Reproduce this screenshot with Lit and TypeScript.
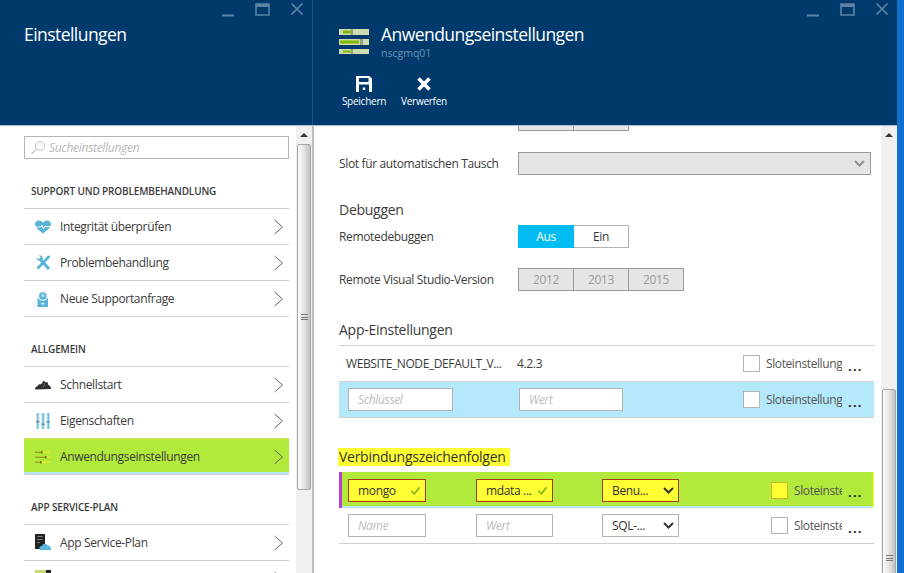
import { LitElement, html, css, svg } from "lit";
import { customElement } from "lit/decorators.js";

const chevron = html`<svg class="chev" width="12" height="16" viewBox="0 0 12 16"><path d="M2.500 1l8 7-8 7" fill="none" stroke="#666" stroke-width="1"/></svg>`;

const icons: Record<string, unknown> = {
  heart: svg`<path d="M8 15.500C3.500 12 0 9.500 0 6 0 3.800 1.800 2.500 3.800 2.500 5.500 2.500 7 3.200 8 4.500 9 3.200 10.500 2.500 12.200 2.500 14.200 2.500 16 3.800 16 6 16 9.500 12.500 12 8 15.500z" fill="#59b4d9"/><path d="M0 9h5.500l1.300-2 1.700 4 1.300-2.500H16" fill="none" stroke="#fff" stroke-width="1"/>`,
  tools: svg`<path d="M4.500 4.500L14 15" stroke="#59b4d9" stroke-width="3.200" fill="none"/><path d="M1 3.500c.3 2.500 2.500 3.800 4.500 3L8 4.500C8 2.500 6.500 1 4 1.200L6 3.500 4 5.500z" fill="#59b4d9"/><path d="M14 2.500L2.500 14.500" stroke="#59b4d9" stroke-width="2.600" fill="none"/><path d="M12.500 3.500l2-2.200 1 1-2 2.200z" fill="#59b4d9"/>`,
  support: svg`<rect x="2.500" y="8" width="10.500" height="9" fill="#59b4d9"/><circle cx="7.800" cy="6" r="5" fill="#fff"/><circle cx="7.800" cy="6" r="3.800" fill="#59b4d9"/><circle cx="7.800" cy="5.500" r="1.700" fill="#b8e0ef"/><path d="M6 13l1.800 2.200L9.500 13z" fill="#fff"/>`,
  quick: svg`<path d="M0 13.500c0-2 1-3 2.500-3.200C3 8.500 4.500 8 6 8.300L9 4.500l1.500 2 2-.5 1 3.300c1.500.2 2.500 1.400 2.500 3.700z" fill="#2f2f2f"/><path d="M8.800 7l1 2.500L8 11" fill="none" stroke="#8a8a8a" stroke-width=".7"/>`,
  props: svg`<path d="M1 1h3.500v16H1zM6.300 1h3.500v16H6.300zM11.500 1H15v16h-3.500z" fill="#cbe6f1"/><path d="M2.200 1h1.200v16H2.200zM7.500 1h1.200v16H7.500zM12.700 1h1.200v16h-1.200z" fill="#59b4d9"/><path d="M1 9h3.500v1.500H1zM6.300 11.500h3.500V13H6.300zM11.500 9H15v1.500h-3.500z" fill="#7b8f99"/>`,
  app: svg`<path d="M0 3.500h15V5H0zM0 8.500h15V10H0zM0 13.500h15V15H0z" fill="#e9e72a"/><path d="M0 3.500h7V5H0zM0 8.500h11V10H0zM0 13.500h6V15H0z" fill="#8fa51f"/><path d="M6 3h1.500v2.500H6zM10 8h1.500v2.500H10zM5 13h1.500v2.500H5z" fill="#5e6f16"/>`,
  plan: svg`<rect x="0" y="0" width="10" height="15" fill="#222"/><path d="M2 2h6v1H2zM2 5h6v1H2zM2 8h3v1H2z" fill="#777"/><path d="M5 16c-1.500-2 0-4.500 2-4 .5-2.500 4.500-3 5.500-.5 2-.5 3.500 1 3.500 4.500z" fill="#59b4d9"/>`,
  next: svg`<rect x="0" y="0" width="11" height="18" fill="#c8d96f"/><rect x="11" y="0" width="5" height="18" fill="#222"/>`,
};

const rowIcon = (n: string) => html`<svg class="ic" width="18" height="18" viewBox="0 0 18 18">${icons[n]}</svg>`;

interface MenuSection { title: string; rows: { icon: string; label: string; sel?: boolean }[] }
const menu: MenuSection[] = [
  { title: "SUPPORT UND PROBLEMBEHANDLUNG", rows: [
    { icon: "heart", label: "Integrität überprüfen" },
    { icon: "tools", label: "Problembehandlung" },
    { icon: "support", label: "Neue Supportanfrage" },
  ]},
  { title: "ALLGEMEIN", rows: [
    { icon: "quick", label: "Schnellstart" },
    { icon: "props", label: "Eigenschaften" },
    { icon: "app", label: "Anwendungseinstellungen", sel: true },
  ]},
  { title: "APP SERVICE-PLAN", rows: [
    { icon: "plan", label: "App Service-Plan" },
    { icon: "next", label: "" },
  ]},
];

const winButtons = html`<div class="win">
  <svg width="14" height="16" viewBox="0 0 14 16"><path d="M1 13.500h12" stroke="#5b84a8" stroke-width="2"/></svg>
  <svg width="15" height="14" viewBox="0 0 15 14"><path d="M1 2h13v11H1z" fill="none" stroke="#5b84a8" stroke-width="1.600"/><path d="M1 3.500h13" stroke="#5b84a8" stroke-width="3"/></svg>
  <svg width="14" height="14" viewBox="0 0 14 14"><path d="M1.500 1.500l11 11M12.500 1.500l-11 11" stroke="#5b84a8" stroke-width="1.700"/></svg>
</div>`;

const tick = html`<svg class="tick" width="11" height="9" viewBox="0 0 13 11"><path d="M1.500 6l3.500 3.500 6.500-8" fill="none" stroke="#86b81e" stroke-width="2.200"/></svg>`;
const caret = html`<svg class="caret" width="11" height="7" viewBox="0 0 11 7"><path d="M1 1l4.500 4.500L10 1" fill="none" stroke="#333" stroke-width="2"/></svg>`;
const caretOff = html`<svg class="caret" width="11" height="7" viewBox="0 0 11 7"><path d="M1 1l4.500 4.500L10 1" fill="none" stroke="#8f8f8f" stroke-width="2"/></svg>`;

@customElement("app-root")
export class AppRoot extends LitElement {
  static styles = css`
    :host { display: block; width: 904px; height: 573px; overflow: hidden; background: #0f6fcf;
      font-family: "Open Sans", "Noto Sans", sans-serif; font-size: 12px; color: #3b3b3b; letter-spacing: -0.35px; }
    .root { display: flex; height: 573px; }
    .blade { display: flex; flex-direction: column; height: 573px; background: #fff; overflow: hidden; }
    .left { width: 312px; }
    .sep { width: 2px; display: flex; flex-direction: column; background: #bdbdbd; }
    .sep div { height: 125px; box-sizing: border-box; background: #003a6c; border-left: 1px solid #1f5080; }
    .right { width: 583px; }
    .head { height: 125px; box-sizing: border-box; background: #003a6c; flex: none; position: relative; color: #fff; }
    .headline { height: 1px; background: #a9bdd0; flex: none; }
    .win { position: absolute; top: 2px; right: 8px; display: flex; gap: 20px; align-items: flex-start; }
    .win svg { display: block; }
    .left .head h1 { margin: 0; padding: 22px 0 0 24px; font-weight: 400; font-size: 17.500px; line-height: 24px; letter-spacing: -0.55px; }
    .titlebar { display: flex; padding: 22px 0 0 25px; gap: 12px; }
    .titlebar h1 { margin: 0; font-weight: 400; font-size: 17.500px; line-height: 24px; letter-spacing: -0.55px; }
    .titlebar .sub { font-size: 10.500px; line-height: 14px; color: #6d93b5; letter-spacing: 0; }
    .hicon { margin-top: 7px; display: block; }
    .cmds { display: flex; padding: 15px 0 0 26px; gap: 12px; }
    .cmd { width: 48px; display: flex; flex-direction: column; align-items: center; font-size: 10px; line-height: 14px; gap: 1px; white-space: nowrap; letter-spacing: -0.25px; }
    .cmd svg { display: block; }
    .body { flex: 1; display: flex; min-height: 0; }
    .pane { flex: 1; min-width: 0; overflow: hidden; }
    .sb { width: 16px; flex: none; background: #f0f0f0; overflow: hidden; }
    .sb .up { height: 18px; display: flex; justify-content: center; align-items: center; }
    .sb .up i { border: 4px solid transparent; border-top: 0; border-bottom: 4px solid #333; width: 0; height: 0; display: block; }
    .thumb { box-sizing: border-box; margin: 0 1px; border: 1px solid #a6a6a6; border-radius: 2px; background: linear-gradient(90deg, #fbfbfb, #e4e4e4 50%, #c2c2c2); display: flex; align-items: center; justify-content: center; }
    .thumb b { display: block; width: 7px; height: 6px; border-top: 1px solid #777; border-bottom: 1px solid #777; box-sizing: border-box; background: linear-gradient(#fff0 2px, #777 2px, #777 3px, #fff0 3px); }

    .lp { padding: 10px 7px 0 24px; }
    .search { height: 23px; box-sizing: border-box; border: 1px solid #b5b5b5; display: flex; align-items: center; padding-left: 5px; gap: 3px; color: #b7b7b7; font-style: italic; letter-spacing: -0.3px; }
    .shead { height: 49px; box-sizing: border-box; display: flex; align-items: flex-end; padding: 0 0 9px 7px; font-size: 10px; line-height: 16px; font-weight: 600; color: #3b3b3b; letter-spacing: -0.15px; }
    .mrow { height: 36px; box-sizing: border-box; border-top: 1px solid #cfcfcf; display: flex; align-items: center; padding: 0 5px 0 11px; gap: 7px; }
    .rows { border-bottom: 1px solid #cfcfcf; }
    .mrow span { flex: 1; font-size: 12px; }
    .mrow.sel { background: #b2ea3b; height: 36px; border-top: 1px solid #d8dc58; box-shadow: inset 0 -2px 0 #b4e6f5; }
    .chev, .ic { flex: none; display: block; }

    .rp { padding: 0 7px 0 25px; }
    .frow { display: flex; align-items: center; height: 23px; }
    .frow label { width: 179px; flex: none; }
    .seg { display: flex; height: 23px; }
    .seg > div { width: 55px; box-sizing: border-box; border: 1px solid #9b9b9b; border-left-width: 0; display: flex; align-items: center; justify-content: center; background: #e5e5e5; color: #9a9a9a; }
    .seg > div:first-child { border-left-width: 1px; width: 56px; }
    .seg.clip { margin: -18px 0 21px 179px; }
    .seg.on > div { background: #fff; border-color: #b3b3b3; color: #3b3b3b; }
    .seg.on > div.a { background: #00bcf2; border-color: #00bcf2; color: #fff; }
    .sel-off { width: 353px; height: 23px; box-sizing: border-box; background: #e5e5e5; border: 1px solid #9b9b9b; display: flex; justify-content: flex-end; align-items: center; padding-right: 5px; }
    h2 { margin: 0; font-weight: 400; font-size: 14px; line-height: 20px; color: #3b3b3b; letter-spacing: -0.27px; }
    .h-deb { margin: 25px 0 5px; }
    .mt20 { margin-top: 20px; }
    .h-app { margin: 29px 0 5px; }
    .table { width: 535px; }
    .trow { height: 36px; box-sizing: border-box; border-top: 1px solid #cfcfcf; display: flex; align-items: center; padding-right: 12px; }
    .trow.last { height: 37px; border-bottom: 1px solid #cfcfcf; }
    .trow.blue { background: #b3e9fb; }
    .key { width: 171px; padding-left: 7px; box-sizing: border-box; color: #3b3b3b; flex: none; white-space: nowrap; letter-spacing: -0.4px; }
    .val { width: 226px; flex: none; color: #3b3b3b; padding-left: 7px; box-sizing: border-box; }
    .inp { height: 23px; box-sizing: border-box; border: 1px solid #b3b3b3; background: #fff; display: flex; align-items: center; padding-left: 9px; color: #bdbdbd; font-style: italic; flex: none; }
    .w105 { width: 105px; margin-left: 9px; }
    .w104 { width: 104px; margin-left: 66px; }
    .cb { width: 17px; height: 17px; box-sizing: border-box; border: 1px solid #b3b3b3; background: #fff; flex: none; }
    .slot { color: #555; overflow: hidden; white-space: nowrap; margin-left: 6px; flex: none; letter-spacing: -0.4px; }
    .w76 { width: 76px; } .w48 { width: 48px; }
    .dots { margin-left: 6px; width: 14px; font-weight: 700; font-size: 13px; line-height: 14px; color: #222; letter-spacing: 1.2px; white-space: nowrap; padding-top: 4px; flex: none; }
    .ml-a { margin-left: auto; }
    .vhead { display: flex; margin: 30px 0 6px; }
    .vhead h2 { background: #ffff33; margin-left: -1px; padding: 0 4px 0 1px; line-height: 18px; height: 18px; color: #333; }
    .crow { height: 36px; box-sizing: border-box; display: flex; align-items: center; }
    .crow.hl { background: #b2ea3b; border-left: 3px solid #b93fd0; border-right: 1px solid #ffff33; box-shadow: inset 0 -2px 0 #b4e6f5; }
    .f { height: 23px; box-sizing: border-box; border: 1px solid #b3b3b3; background: #fff; display: flex; align-items: center; flex: none; padding: 0 4px 0 9px; justify-content: space-between; color: #333; }
    .hl .f { background: #ffff33; border-color: #a83a10; }
    .hl .cb { background: #ffff33; border-color: #c9b92a; }
    .ph { color: #bdbdbd; font-style: italic; }
    .f1 { width: 78px; } .f2 { width: 77px; }
    .g9 { margin-left: 9px; } .g6 { margin-left: 6px; } .g50 { margin-left: 50px; } .g49 { margin-left: 49px; }
    .g92 { margin-left: 92px; }
    .tick, .caret { flex: none; display: block; }
    .crow.n { height: 36px; border-bottom: 1px solid #cfcfcf; }
  `;

  private scrollbar(gap: number, h: number) {
    return html`<div class="sb"><div class="up"><i></i></div>
      <div class="thumb" style="margin-top:${gap}px;height:${h}px"><b></b></div></div>`;
  }

  private section(s: MenuSection) {
    return html`<div class="shead">${s.title}</div>
      <div class="rows">${s.rows.map((r) => html`<div class="mrow ${r.sel ? "sel" : ""}">${rowIcon(r.icon)}<span>${r.label}</span>${chevron}</div>`)}</div>`;
  }

  render() {
    return html`<div class="root">
      <section class="blade left">
        <header class="head"><h1>Einstellungen</h1>${winButtons}</header>
        <div class="headline"></div>
        <div class="body">
          <div class="pane lp">
            <div class="search">
              <svg width="16" height="15" viewBox="0 0 16 15"><circle cx="10" cy="6" r="4.500" fill="none" stroke="#c4c4c4"/><path d="M6.500 9L1.500 14" stroke="#c4c4c4" stroke-width="1.200"/></svg>
              Sucheinstellungen
            </div>
            ${menu.map((s) => this.section(s))}
          </div>
          ${this.scrollbar(0, 346)}
        </div>
      </section>
      <div class="sep"><div></div></div>
      <section class="blade right">
        <header class="head">
          <div class="titlebar">
            <svg class="hicon" width="30" height="26" viewBox="0 0 30 26">
              <path d="M0 0h30v6H0zM0 10h30v6H0zM0 20h30v5H0z" fill="#cfdcae"/>
              <path d="M4 1.500h8v3H4zM1 11.500h19v3H1zM4 21.500h8v2H4z" fill="#7fba00"/>
              <path d="M12 0h2v6h-2zM21 10h3v6h-3zM12 20h2v5h-2z" fill="#9a9f8d"/>
            </svg>
            <div><h1>Anwendungseinstellungen</h1><div class="sub">nscgmq01</div></div>
          </div>
          <div class="cmds">
            <div class="cmd">
              <svg width="18" height="18" viewBox="0 0 18 18"><path fill-rule="evenodd" d="M1 1h13.500L17 3.500V17H1zM4 3v4h9.500V3zM4 9.500V17h10V9.500zM7.800 12.500h2.400V15H7.800z" fill="#fff"/></svg>
              Speichern
            </div>
            <div class="cmd">
              <svg width="18" height="18" viewBox="0 0 18 18"><path d="M3.500 3.500l11 11M14.500 3.500l-11 11" stroke="#fff" stroke-width="3.600"/></svg>
              Verwerfen
            </div>
          </div>
          ${winButtons}
        </header>
        <div class="headline"></div>
        <div class="body">
          <div class="pane rp">
            <div class="seg clip"><div></div><div></div></div>
            <div class="frow"><label>Slot für automatischen Tausch</label><div class="sel-off">${caretOff}</div></div>
            <h2 class="h-deb">Debuggen</h2>
            <div class="frow"><label>Remotedebuggen</label><div class="seg on"><div class="a">Aus</div><div>Ein</div></div></div>
            <div class="frow mt20"><label>Remote Visual Studio-Version</label><div class="seg"><div>2012</div><div>2013</div><div>2015</div></div></div>
            <h2 class="h-app">App-Einstellungen</h2>
            <div class="table">
              <div class="trow">
                <div class="key">WEBSITE_NODE_DEFAULT_V...</div><div class="val">4.2.3</div>
                <div class="cb ml-a"></div><div class="slot w76">Sloteinstellung</div><div class="dots">...</div>
              </div>
              <div class="trow blue last">
                <div class="inp w105">Schlüssel</div><div class="inp w104">Wert</div>
                <div class="cb ml-a"></div><div class="slot w76">Sloteinstellung</div><div class="dots">...</div>
              </div>
              <div class="vhead"><h2>Verbindungszeichenfolgen</h2></div>
              <div class="crow hl">
                <div class="f f1 g6">mongo ${tick}</div>
                <div class="f f2 g50">mdata ... ${tick}</div>
                <div class="f f2 g49">Benu... ${caret}</div>
                <div class="cb g92"></div><div class="slot w48">Sloteinstellung</div><div class="dots">...</div>
              </div>
              <div class="crow n">
                <div class="f f1 g9 ph">Name</div>
                <div class="f f2 g50 ph">Wert</div>
                <div class="f f2 g49">SQL-... ${caret}</div>
                <div class="cb g92"></div><div class="slot w48">Sloteinstellung</div><div class="dots">...</div>
              </div>
            </div>
          </div>
          ${this.scrollbar(245, 338)}
        </div>
      </section>
    </div>`;
  }
}
